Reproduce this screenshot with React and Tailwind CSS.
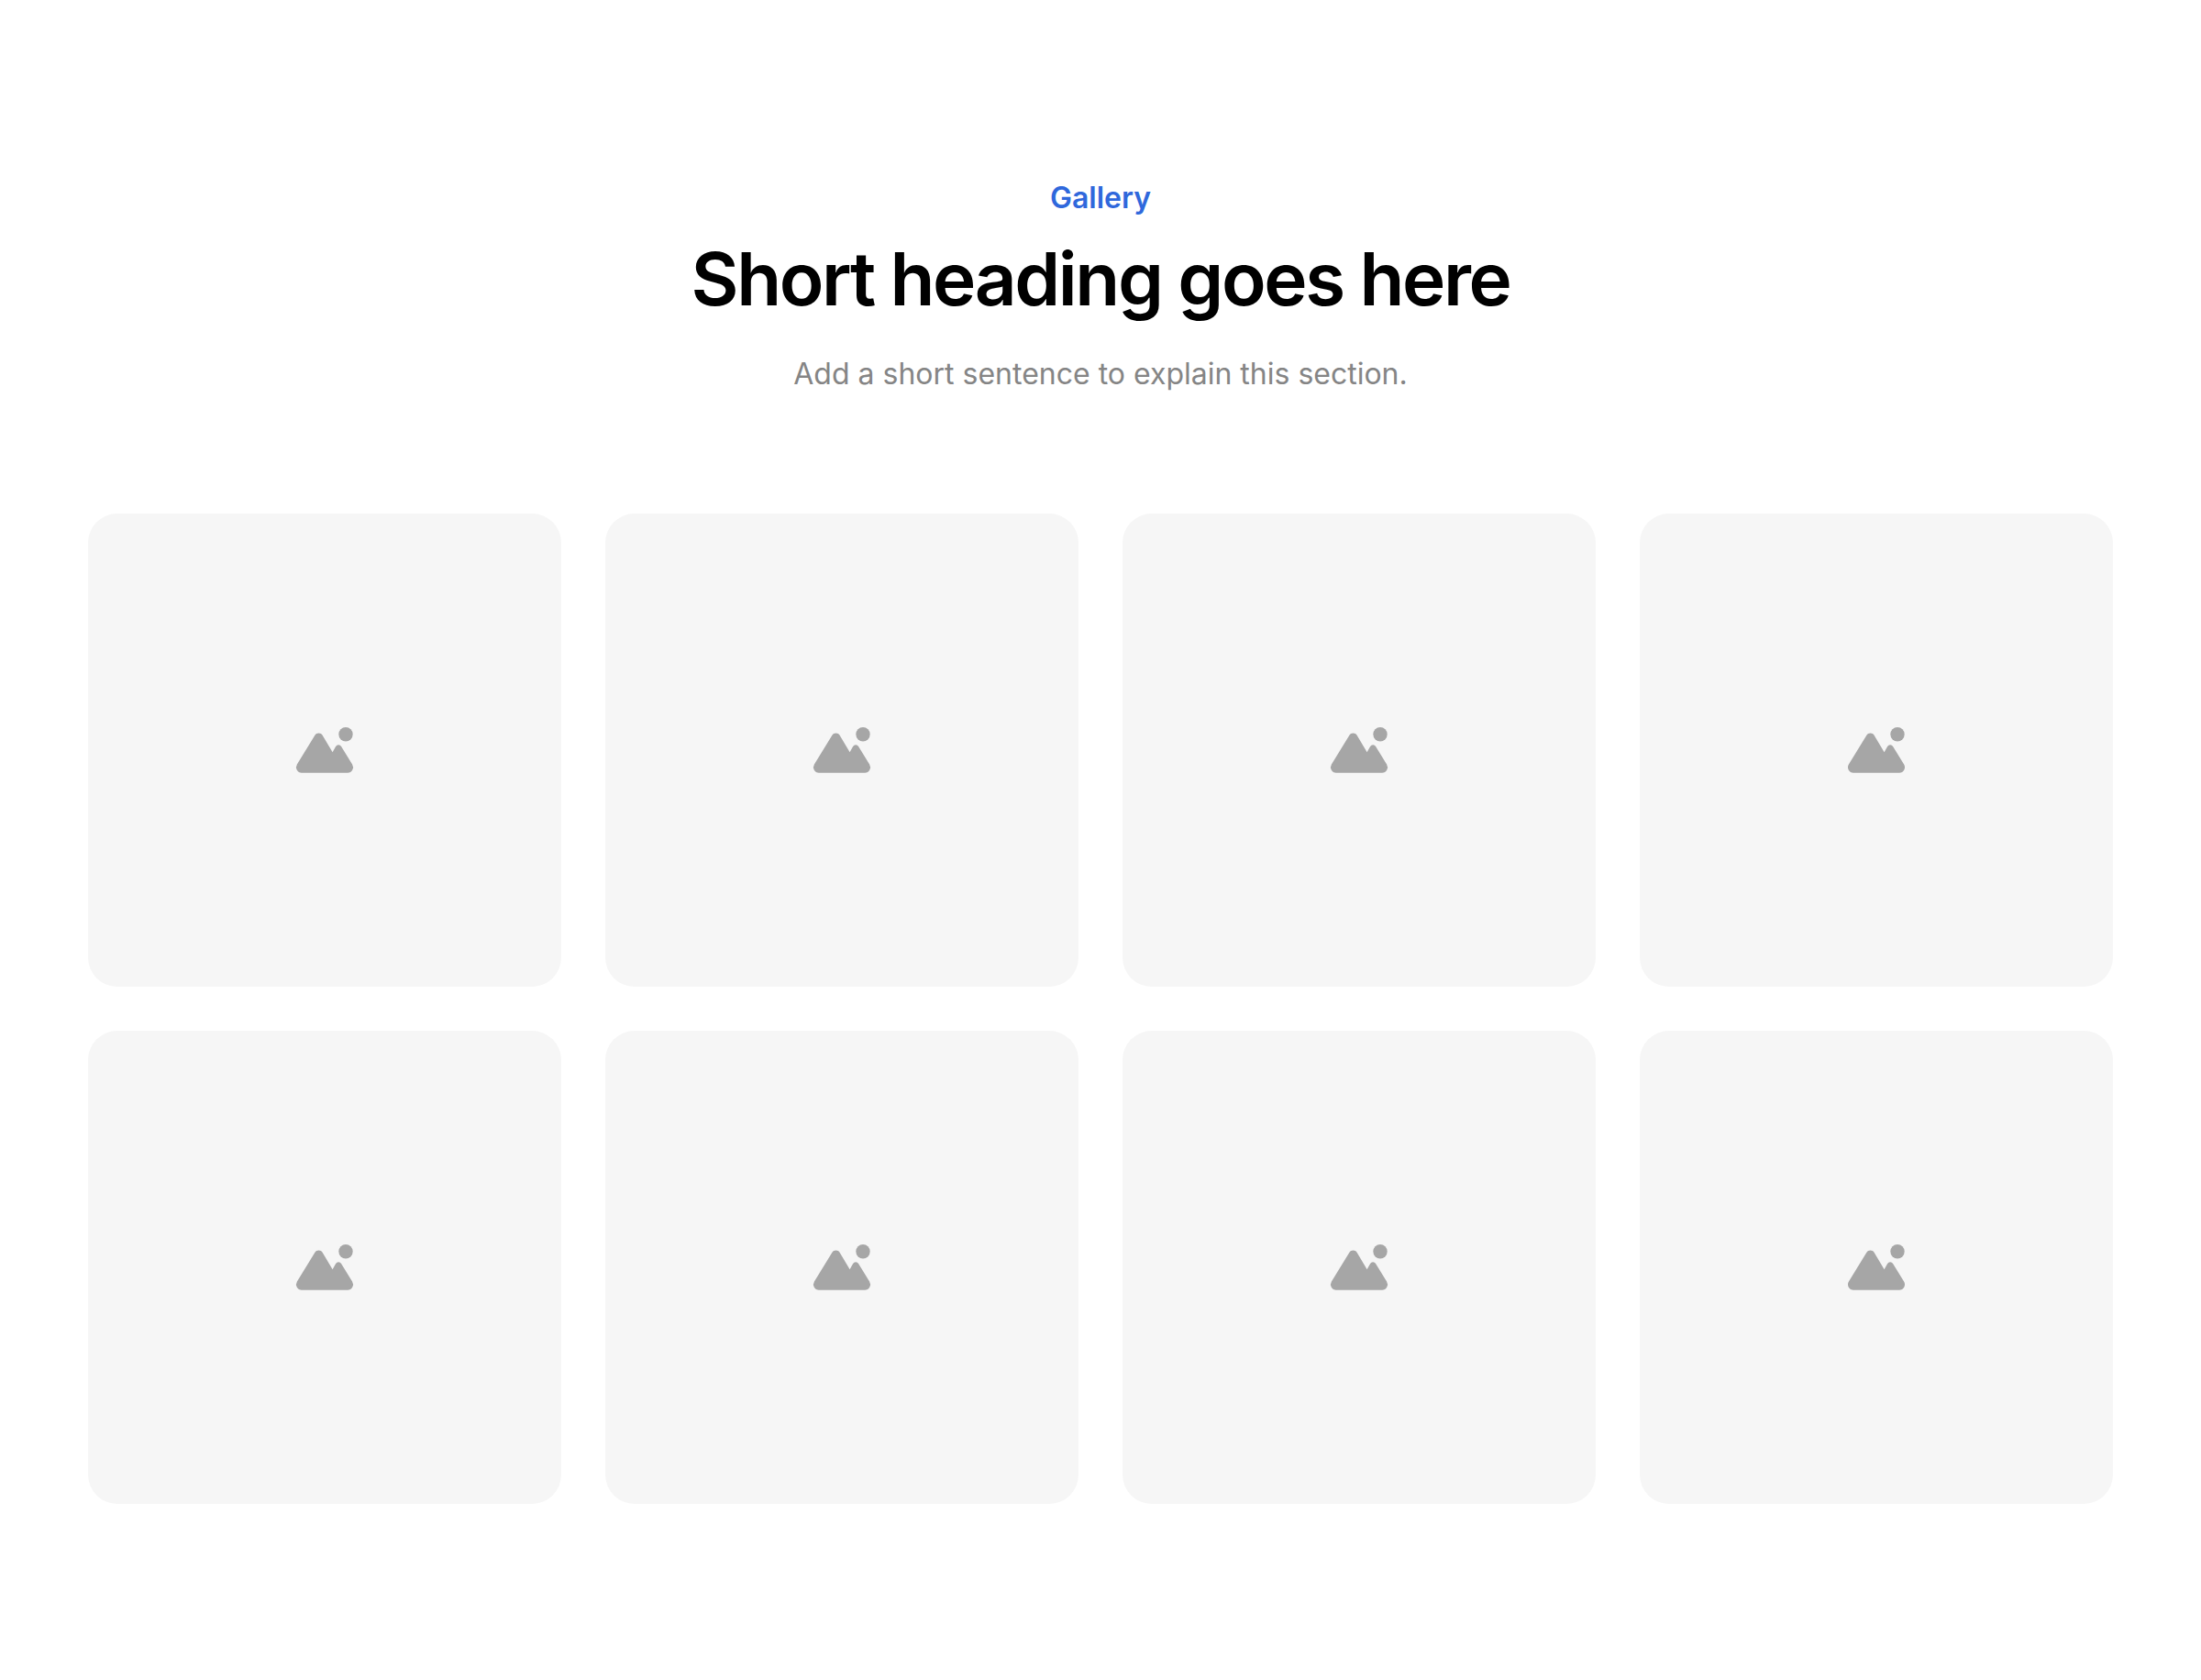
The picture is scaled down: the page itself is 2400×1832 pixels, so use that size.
const cards = Array.from({ length: 8 });

const ImageIcon = () => (
  <svg width="96" height="96" viewBox="0 0 96 96" fill="#a6a6a6">
    <circle cx="71" cy="30.7" r="7.7" />
    <path d="M37.4 31.7 A4.8 4.8 0 0 1 45.6 31.7 L56.6 50.2 L60.1 44 A3.5 3.5 0 0 1 66.1 44 L78.1 63.6 A6 6 0 0 1 73 72.7 L23 72.7 A6 6 0 0 1 17.9 63.6 Z" />
  </svg>
);

export default function App() {
  return (
    <div className="bg-white px-24 py-48 font-['Inter',sans-serif]">
      <div className="flex flex-col items-center text-center">
        <p className="text-[32px] leading-[48px] font-semibold text-[#2f68dc]">Gallery</p>
        <h1 className="mt-4 text-[80px] leading-[96px] font-semibold tracking-[-0.03em] text-black">Short heading goes here</h1>
        <p className="mt-8 text-[32px] leading-[48px] text-[#858585]">Add a short sentence to explain this section.</p>
      </div>
      <div className="mt-32 grid grid-cols-4 gap-12">
        {cards.map((_, i) => (
          <div key={i} className="flex aspect-square items-center justify-center rounded-[32px] bg-[#f6f6f6]">
            <ImageIcon />
          </div>
        ))}
      </div>
    </div>
  );
}
